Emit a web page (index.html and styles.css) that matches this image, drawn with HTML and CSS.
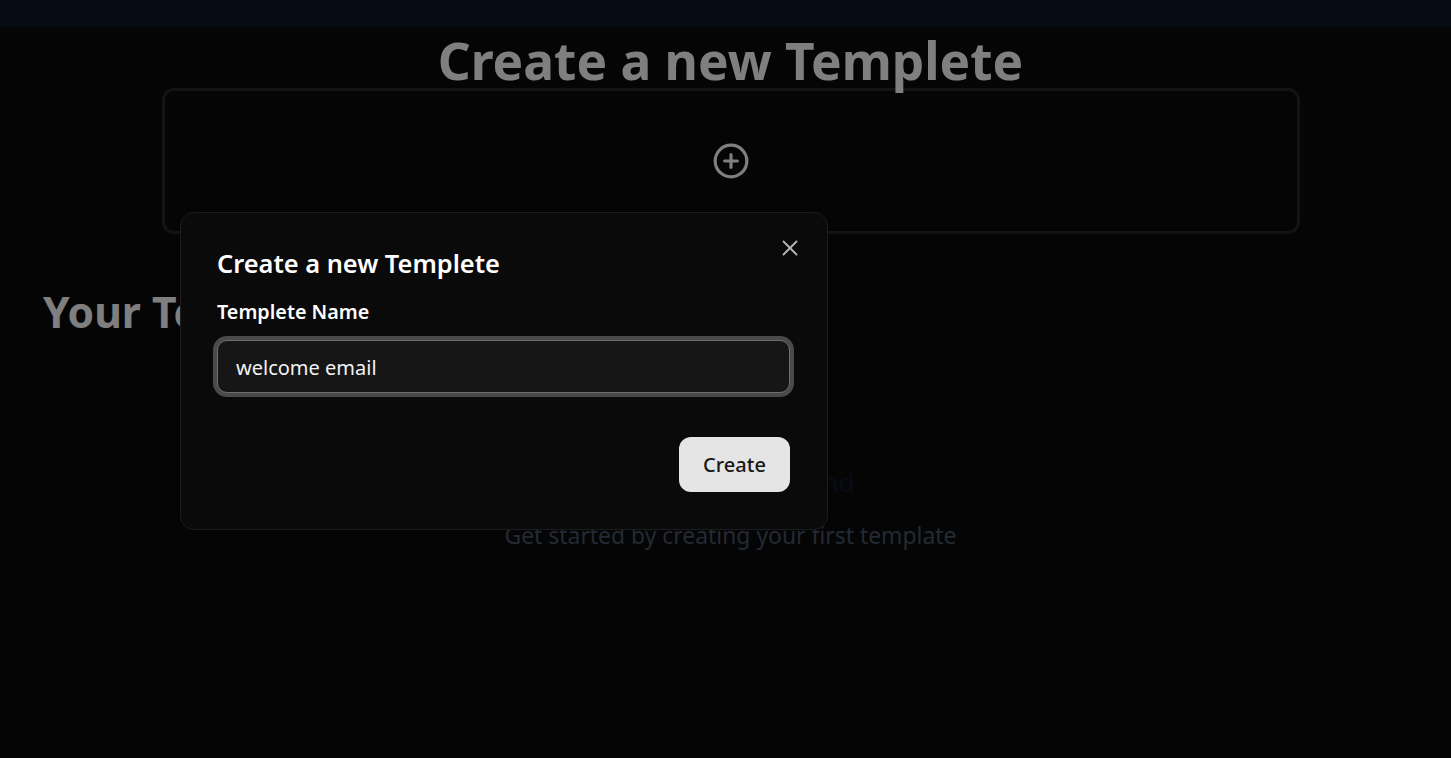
FILE: index.html
```html
<!DOCTYPE html>
<html lang="en">
<head>
<meta charset="utf-8">
<title>Create a new Templete</title>
<link rel="stylesheet" href="styles.css">
</head>
<body>
<header class="topbar"></header>
<main class="page">
  <h1 class="page-title">Create a new Templete</h1>
  <section class="add-card">
    <svg class="add-icon" viewBox="0 0 24 24" fill="none" stroke="currentColor" stroke-width="2" stroke-linecap="round" stroke-linejoin="round" aria-hidden="true"><circle cx="12" cy="12" r="10"/><path d="M8 12h8"/><path d="M12 8v8"/></svg>
  </section>
  <h2 class="section-title">Your Templetes</h2>
  <section class="empty">
    <h3 class="empty-title">No templates found</h3>
    <p class="empty-text">Get started by creating your first template</p>
  </section>
</main>
<div class="overlay">
  <div class="dialog">
    <button class="close" aria-label="Close">
      <svg viewBox="0 0 24 24" fill="none" stroke="currentColor" stroke-width="1.7" stroke-linecap="round" stroke-linejoin="round" aria-hidden="true"><path d="M18 6 6 18"/><path d="m6 6 12 12"/></svg>
    </button>
    <h2 class="dialog-title">Create a new Templete</h2>
    <label class="field-label" for="name">Templete Name</label>
    <input class="field" id="name" type="text" value="welcome email">
    <div class="actions"><button class="primary">Create</button></div>
  </div>
</div>
</body>
</html>
```
FILE: styles.css
```css
* { box-sizing: border-box; }
html, body { margin: 0; height: 100%; }
body {
  background: #0a0a0a;
  color: #fff;
  font-family: "Noto Sans", "Open Sans", sans-serif;
  overflow: hidden;
  position: relative;
}
.topbar { height: 27px; background: #0e1729; }
.page { display: flex; flex-direction: column; align-items: center; padding-left: 10px; }
.page-title {
  position: relative;
  z-index: 1;
  margin: 0;
  height: 61px;
  font-size: 51.4px;
  line-height: 66px;
  font-weight: 700;
  text-align: center;
  white-space: nowrap;
}
.add-card {
  width: 1138px;
  height: 146px;
  border: 3px solid #272727;
  border-radius: 12px;
  display: flex;
  align-items: center;
  justify-content: center;
}
.add-icon { width: 38px; height: 38px; color: #fff; }
.section-title {
  align-self: flex-start;
  margin: 50px 0 0 33px;
  font-size: 42.6px;
  line-height: 54px;
  font-weight: 700;
  color: #fff;
}
.empty { margin-top: 126px; text-align: center; }
.empty-title {
  margin: 0;
  font-size: 26px;
  line-height: 36px;
  font-weight: 500;
  color: #0f172a;
}
.empty-text {
  margin: 21px 0 0;
  font-size: 22.9px;
  line-height: 30px;
  color: #475466;
}
.overlay {
  position: absolute;
  inset: 0;
  z-index: 2;
  background: rgba(0, 0, 0, 0.5);
  padding: 212px 0 0 180px;
}
.dialog {
  position: relative;
  width: 648px;
  height: 318px;
  padding: 35px 36px;
  background: #0a0a0a;
  border: 1px solid #1c1c1c;
  border-radius: 14px;
  display: flex;
  flex-direction: column;
}
.close {
  position: absolute;
  top: 22px;
  right: 24px;
  width: 26px;
  height: 26px;
  padding: 0;
  background: none;
  border: 0;
  color: #b5b5b5;
}
.close svg { width: 26px; height: 26px; display: block; }
.dialog-title {
  margin: 0;
  font-size: 25.4px;
  line-height: 30px;
  font-weight: 600;
}
.field-label {
  margin-top: 21px;
  font-size: 19.75px;
  line-height: 26px;
  font-weight: 600;
}
.field {
  margin-top: 15px;
  width: 573px;
  height: 53px;
  padding: 2px 18px 0;
  background: #161616;
  border: 1px solid #6e6e6e;
  border-radius: 10px;
  box-shadow: 0 0 0 4px #4a4a4a;
  outline: 0;
  color: #f2f2f2;
  font: 400 20px "Noto Sans", "Open Sans", sans-serif;
}
.actions { margin-top: 44px; margin-right: 1px; display: flex; justify-content: flex-end; }
.primary {
  width: 111px;
  height: 55px;
  background: #e5e5e5;
  color: #171717;
  border: 0;
  border-radius: 12px;
  font: 500 20px "Noto Sans", "Open Sans", sans-serif;
}
```
